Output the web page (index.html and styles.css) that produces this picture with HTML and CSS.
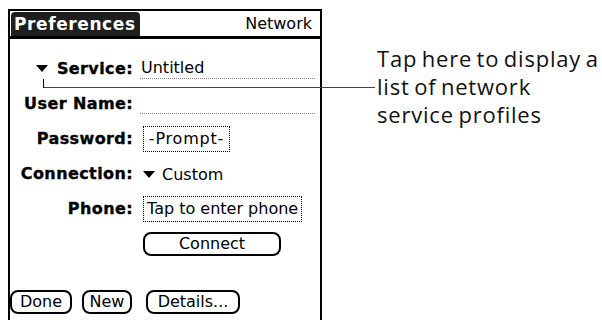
FILE: index.html
```html
<!DOCTYPE html>
<html>
<head>
<meta charset="utf-8">
<link rel="stylesheet" href="styles.css">
</head>
<body>
<div class="page">
  <div class="screen">
    <div class="titlebar">
      <div class="tab">Preferences</div>
      <div class="panel">Network</div>
    </div>
    <div class="form">
      <div class="label"><svg class="tri tri-label" width="12" height="7" viewBox="0 0 12 7"><polygon points="0,0 12,0 6,7" fill="#000"/></svg>Service:</div>
      <div class="value"><span class="line">Untitled</span></div>
      <div class="label">User Name:</div>
      <div class="value"><span class="line"></span></div>
      <div class="label">Password:</div>
      <div class="value"><span class="box box-prompt">-Prompt-</span></div>
      <div class="label">Connection:</div>
      <div class="value"><span class="pick"><svg class="tri" width="12" height="7" viewBox="0 0 12 7"><polygon points="0,0 12,0 6,7" fill="#000"/></svg>Custom</span></div>
      <div class="label">Phone:</div>
      <div class="value"><span class="box">Tap to enter phone</span></div>
      <div class="value span2"><span class="btn btn-connect">Connect</span></div>
    </div>
    <div class="footer">
      <span class="btn btn-done">Done</span>
      <span class="btn btn-new">New</span>
      <span class="btn btn-details">Details...</span>
    </div>
  </div>
  <div class="callout">
    <div class="cl">Tap here to display a</div>
    <div class="cl">list of network</div>
    <div class="cl">service profiles</div>
  </div>
  <div class="leader"></div>
</div>
</body>
</html>
```
FILE: styles.css
```css
* { box-sizing: border-box; }
html, body { margin: 0; padding: 0; background: #fff; }
body { width: 602px; height: 320px; overflow: hidden; font-family: "DejaVu Sans", sans-serif; color: #000; }
.page { position: relative; display: flex; align-items: flex-start; height: 320px; }
.screen {
  margin-left: 8px; margin-top: 9px; width: 314px; height: 320px;
  border: 2px solid #000; border-bottom: none;
  display: flex; flex-direction: column;
}
.titlebar {
  display: flex; justify-content: space-between; align-items: flex-end;
  height: 28px; border-bottom: 3px solid #000;
}
.tab {
  margin-left: 1px; height: 24px; line-height: 24px;
  background: #1e1e1e; color: #fff; border-radius: 4px 4px 0 0;
  padding: 0 0 0 3px; font-weight: bold; font-size: 17px; letter-spacing: 0.6px;
  width: 129px; white-space: nowrap;
}
.panel { font-size: 16px; line-height: 24px; padding-right: 8px; }
.form {
  display: grid; grid-template-columns: 123px 175px; column-gap: 7px;
  grid-auto-rows: 35px; align-items: center; padding-top: 12px;
}
.label { text-align: right; font-weight: bold; font-size: 16px; letter-spacing: 0.4px; white-space: nowrap; display: flex; justify-content: flex-end; align-items: center; -webkit-text-stroke: 0.35px #000; }
.tri-label { margin-right: 9px; }
.value { font-size: 16px; white-space: nowrap; }
.span2 { grid-column: 2; }
.line { display: block; height: 20px; line-height: 18px; border-bottom: 1px dotted #888; padding-left: 1px; width: 175px; }
.box { display: inline-block; margin-left: 3px; height: 26px; line-height: 24px; border: 1px dotted #000; padding: 0 3px; }
.box-prompt { width: 87px; text-align: center; letter-spacing: 0.8px; }
.pick { display: inline-flex; align-items: center; margin-left: 3px; }
.pick .tri { margin-right: 7px; }
.btn { display: inline-block; height: 24px; line-height: 20px; border: 2px solid #000; border-radius: 8px; font-size: 16px; text-align: center; }
.btn-connect { margin-left: 3px; width: 138px; }
.btn-done { width: 62px; }
.btn-new { width: 50px; }
.btn-details { width: 94px; margin-left: 4px; }
.footer { display: flex; gap: 10px; margin-top: 29px; }
.callout { margin-left: 55px; margin-top: 44px; font-family: "Open Sans", sans-serif; font-size: 22px; color: #111; letter-spacing: 0.8px; word-spacing: -2px; }
.cl { height: 28px; line-height: 28px; white-space: nowrap; }
.leader { position: absolute; left: 43px; top: 79px; width: 332px; height: 9px; border-left: 1px solid #000; border-bottom: 1px solid #444; }
```
